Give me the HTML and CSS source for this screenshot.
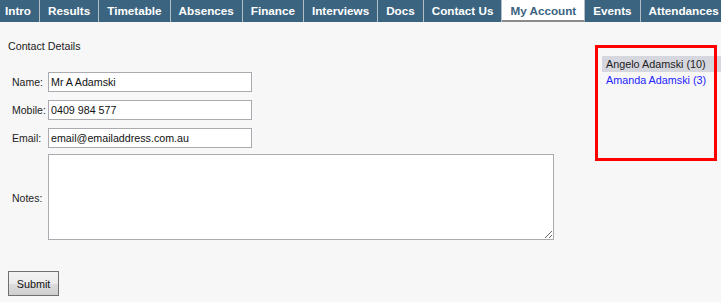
FILE: index.html
```html
<!DOCTYPE html>
<html>
<head>
<meta charset="utf-8">
<link rel="stylesheet" href="styles.css">
</head>
<body>
<nav class="tabs">
  <a class="tab">Intro</a>
  <a class="tab">Results</a>
  <a class="tab">Timetable</a>
  <a class="tab">Absences</a>
  <a class="tab">Finance</a>
  <a class="tab">Interviews</a>
  <a class="tab">Docs</a>
  <a class="tab">Contact Us</a>
  <a class="tab active">My Account</a>
  <a class="tab">Events</a>
  <a class="tab">Attendances</a>
</nav>
<div class="content">
  <main class="main">
    <h2 class="heading">Contact Details</h2>
    <form class="form">
      <label class="label">Name:</label>
      <input class="field" type="text" value="Mr A Adamski">
      <label class="label">Mobile:</label>
      <input class="field" type="text" value="0409 984 577">
      <label class="label">Email:</label>
      <input class="field" type="text" value="email@emailaddress.com.au">
      <label class="label notes-label">Notes:</label>
      <textarea class="notes"></textarea>
      <div class="actions">
        <button class="submit" type="button">Submit</button>
      </div>
    </form>
  </main>
  <aside class="aside">
    <ul class="students">
      <li class="student selected">Angelo Adamski (10)</li>
      <li class="student link">Amanda Adamski (3)</li>
    </ul>
  </aside>
  <div class="highlight"></div>
</div>
</body>
</html>
```
FILE: styles.css
```css
html, body {
  margin: 0;
  padding: 0;
  background: #f7f7f7;
  font-family: "Liberation Sans", Arial, sans-serif;
  font-size: 10.7px;
  color: #222;
  overflow: hidden;
}

.tabs {
  display: flex;
  height: 22px;
  background: #3b6480;
  white-space: nowrap;
  overflow: hidden;
}

.tab {
  flex: none;
  display: flex;
  align-items: center;
  padding: 0 8px 1px;
  border-right: 1px solid #b4bec6;
  color: #fff;
  font-weight: bold;
  font-size: 11.7px;
  cursor: pointer;
}

.tab:first-child {
  padding-left: 5px;
}

.tab.active {
  background: #fff;
  color: #3b6480;
  border-bottom: 2px solid #8a8a8a;
  padding-bottom: 0;
  box-sizing: border-box;
}

.content {
  position: relative;
  display: flex;
  padding-left: 8px;
}

.main {
  flex: 1;
}

.heading {
  margin: 17px 0 0;
  font-size: 10.7px;
  font-weight: normal;
  line-height: 14px;
}

.form {
  display: grid;
  grid-template-columns: 36px auto;
  justify-content: start;
  align-items: center;
  row-gap: 8px;
  margin-top: 19px;
  padding-left: 4px;
}

.label {
  font-size: 10.5px;
}

.field {
  box-sizing: border-box;
  width: 204px;
  height: 20px;
  margin: 0;
  padding: 1px 2px;
  border: 1px solid #aaaab0;
  background: #fff;
  font-family: "Liberation Sans", Arial, sans-serif;
  font-size: 10.7px;
  color: #111;
  outline: none;
}

.notes {
  box-sizing: border-box;
  width: 506px;
  height: 86px;
  margin: -2px 0 0;
  padding: 2px;
  border: 1px solid #aaaab0;
  background: #fff;
  font-family: "Liberation Sans", Arial, sans-serif;
  font-size: 10.7px;
  display: block;
}

.actions {
  grid-column: 1 / 3;
  margin-top: 23px;
  margin-left: -4px;
}

.submit {
  box-sizing: border-box;
  width: 51px;
  height: 25px;
  margin: 0;
  padding: 0;
  border: 1px solid #707070;
  border-radius: 0;
  background: linear-gradient(#f2f2f2 0%, #ebebeb 50%, #dddddd 51%, #cfcfcf 100%);
  font-family: "Liberation Sans", Arial, sans-serif;
  font-size: 10.8px;
  color: #111;
}

.aside {
  width: 119px;
  flex: none;
  padding-top: 34px;
}

.students {
  list-style: none;
  margin: 0;
  padding: 0;
}

.student {
  height: 16px;
  line-height: 16px;
  padding-left: 4px;
  font-size: 10.8px;
  white-space: nowrap;
}

.student.selected {
  background: #d6d6de;
  color: #222;
}

.student.link {
  color: #2424ff;
}

.highlight {
  position: absolute;
  left: 595px;
  top: 23px;
  width: 122px;
  height: 116px;
  box-sizing: border-box;
  border: 3px solid #ff0000;
  pointer-events: none;
}
```
